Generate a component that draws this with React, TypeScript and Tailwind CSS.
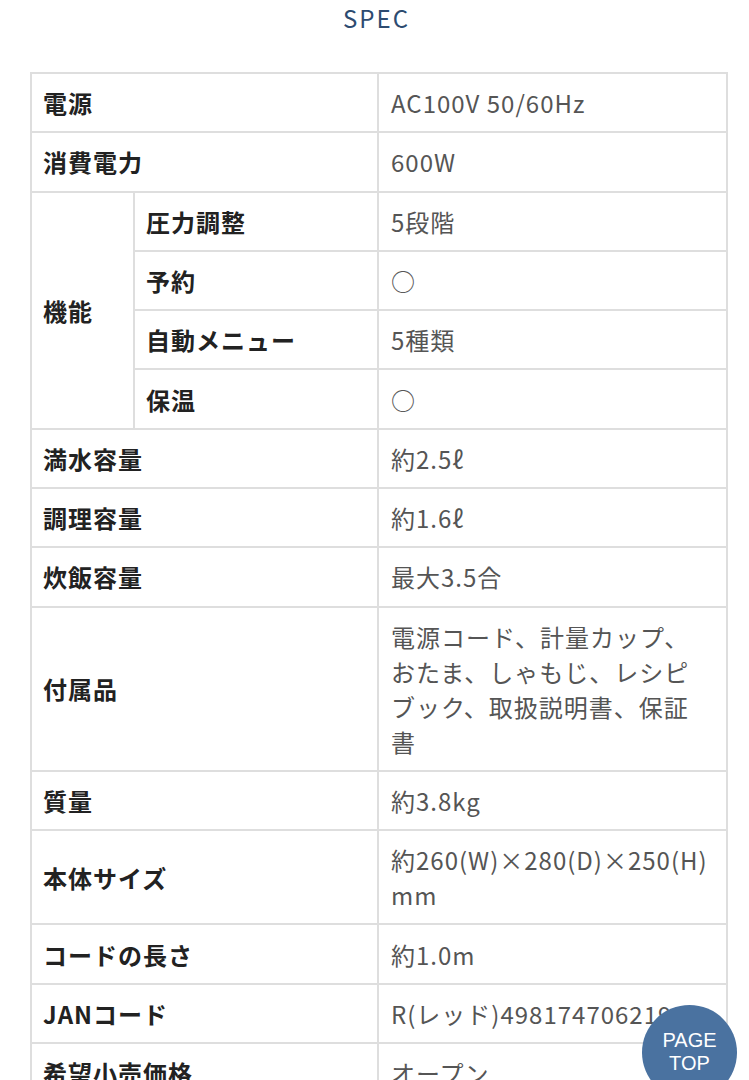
import React from "react";

type Row =
  | { kind: "single"; label: string; value: string }
  | { kind: "group"; label: string; items: { label: string; value: string }[] };

const rows: Row[] = [
  { kind: "single", label: "電源", value: "AC100V 50/60Hz" },
  { kind: "single", label: "消費電力", value: "600W" },
  {
    kind: "group",
    label: "機能",
    items: [
      { label: "圧力調整", value: "5段階" },
      { label: "予約", value: "○" },
      { label: "自動メニュー", value: "5種類" },
      { label: "保温", value: "○" },
    ],
  },
  { kind: "single", label: "満水容量", value: "約2.5ℓ" },
  { kind: "single", label: "調理容量", value: "約1.6ℓ" },
  { kind: "single", label: "炊飯容量", value: "最大3.5合" },
  {
    kind: "single",
    label: "付属品",
    value: "電源コード、計量カップ、おたま、しゃもじ、レシピブック、取扱説明書、保証書",
  },
  { kind: "single", label: "質量", value: "約3.8kg" },
  { kind: "single", label: "本体サイズ", value: "約260(W)×280(D)×250(H)mm" },
  { kind: "single", label: "コードの長さ", value: "約1.0m" },
  { kind: "single", label: "JANコード", value: "R(レッド)4981747062192" },
  { kind: "single", label: "希望小売価格", value: "オープン" },
];

const th =
  "border-2 border-[#dedede] pl-[11px] pr-[11px] py-[11.15px] text-left align-middle font-bold text-[#222] break-all";
const td =
  "border-2 border-[#dedede] pl-[12px] pr-[15px] py-[11.15px] text-left align-middle font-normal text-[#555] break-all";

export default function App() {
  return (
    <div
      className="min-h-screen bg-white"
      style={{ fontFamily: '"Noto Sans CJK JP", "Noto Sans", sans-serif' }}
    >
      <h2 className="pt-0 text-center text-[24px] leading-[36px] tracking-[2px] text-[#2d4b70] font-normal pl-[4px]">
        SPEC
      </h2>
      <div className="pl-[30px] pt-[36px] pb-[40px]">
        <table className="w-[696px] table-fixed border-collapse text-[24px] leading-[35px] tracking-[1px]">
          <colgroup>
            <col className="w-[103px]" />
            <col className="w-[244px]" />
            <col className="w-[349px]" />
          </colgroup>
          <tbody>
            {rows.map((r, i) =>
              r.kind === "single" ? (
                <tr key={i}>
                  <th colSpan={2} className={th}>
                    {r.label}
                  </th>
                  <td className={td}>{r.value}</td>
                </tr>
              ) : (
                r.items.map((it, j) => (
                  <tr key={`${i}-${j}`}>
                    {j === 0 && (
                      <th rowSpan={r.items.length} className={th}>
                        {r.label}
                      </th>
                    )}
                    <th className={th}>{it.label}</th>
                    <td className={td}>{it.value}</td>
                  </tr>
                ))
              )
            )}
          </tbody>
        </table>
      </div>
      <div
        className="fixed left-[642px] top-[1005px] flex h-[95px] w-[95px] flex-col items-center justify-center rounded-full bg-[#4a72a0] text-center text-[20px] leading-[23px] text-white"
        style={{ fontFamily: '"Liberation Sans", Arial, sans-serif' }}
      >
        <span className="-mt-[2px]">PAGE</span>
        <span>TOP</span>
      </div>
    </div>
  );
}
